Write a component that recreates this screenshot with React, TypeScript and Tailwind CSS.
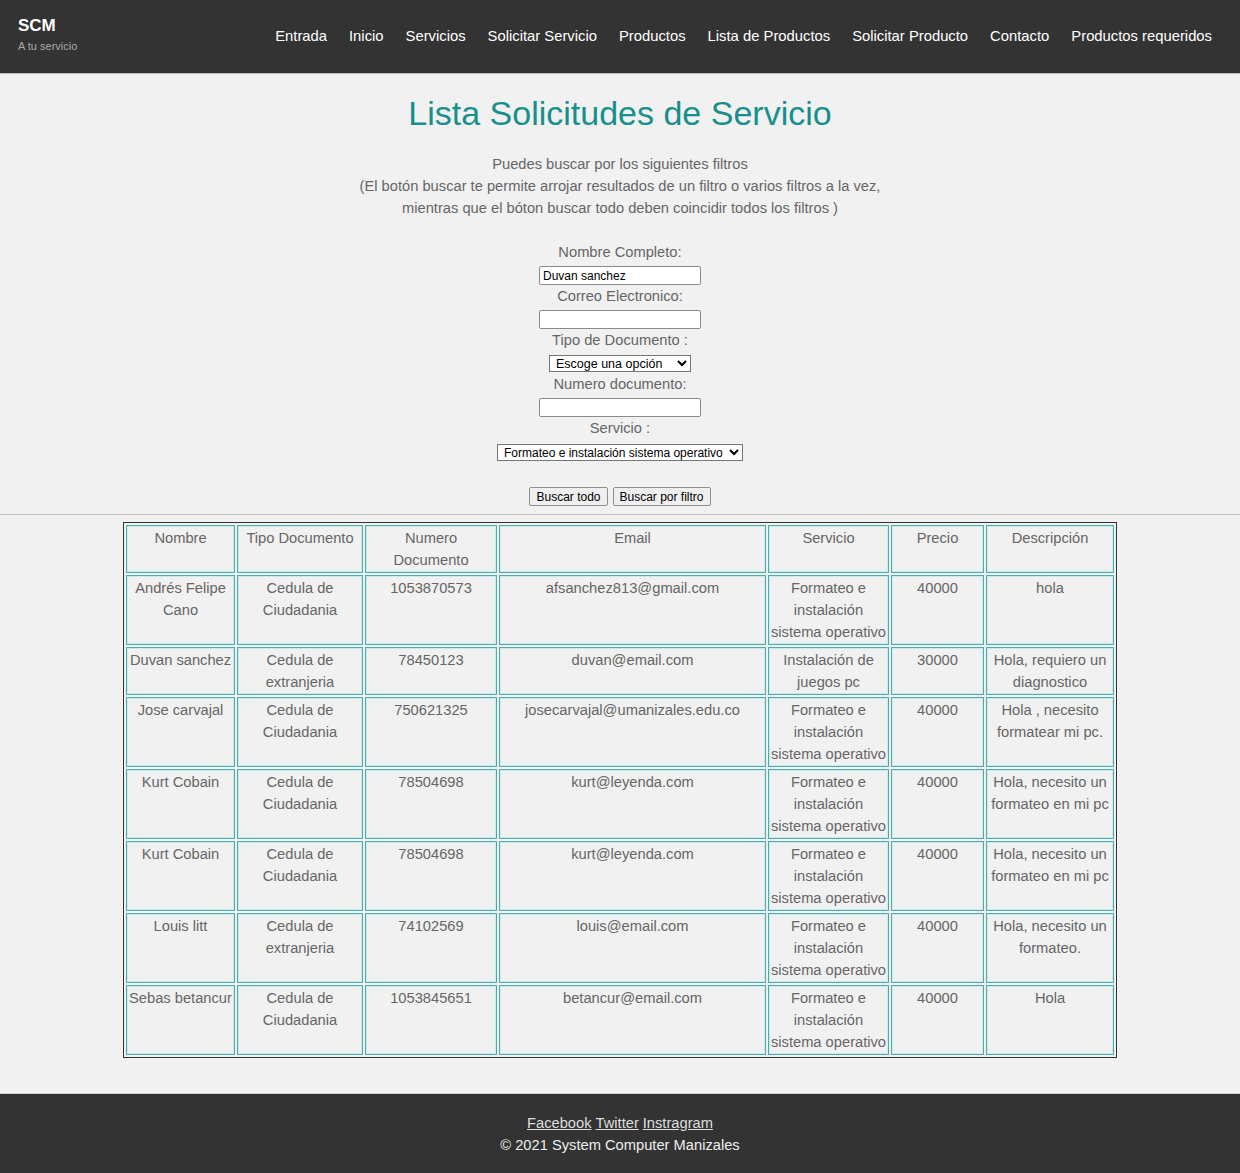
import React from "react";

const navLinks = [
  "Entrada",
  "Inicio",
  "Servicios",
  "Solicitar Servicio",
  "Productos",
  "Lista de Productos",
  "Solicitar Producto",
  "Contacto",
  "Productos requeridos",
];

const formateo = "Formateo e instalación sistema operativo";

const rows = [
  ["Andrés Felipe Cano", "Cedula de Ciudadania", "1053870573", "afsanchez813@gmail.com", formateo, "40000", "hola"],
  ["Duvan sanchez", "Cedula de extranjeria", "78450123", "duvan@email.com", "Instalación de juegos pc", "30000", "Hola, requiero un diagnostico"],
  ["Jose carvajal", "Cedula de Ciudadania", "750621325", "josecarvajal@umanizales.edu.co", formateo, "40000", "Hola , necesito formatear mi pc."],
  ["Kurt Cobain", "Cedula de Ciudadania", "78504698", "kurt@leyenda.com", formateo, "40000", "Hola, necesito un formateo en mi pc"],
  ["Kurt Cobain", "Cedula de Ciudadania", "78504698", "kurt@leyenda.com", formateo, "40000", "Hola, necesito un formateo en mi pc"],
  ["Louis litt", "Cedula de extranjeria", "74102569", "louis@email.com", formateo, "40000", "Hola, necesito un formateo."],
  ["Sebas betancur", "Cedula de Ciudadania", "1053845651", "betancur@email.com", formateo, "40000", "Hola"],
];

const headers = ["Nombre", "Tipo Documento", "Numero Documento", "Email", "Servicio", "Precio", "Descripción"];
const colWidths = [109, 126, 132, 267, 121, 93, 128];

const cell =
  "border border-[#54abab] shadow-[inset_0_0_0_1px_#c4eeee] px-[1px] py-[1px] align-top text-center font-normal leading-[22px] text-[#666]";

const Label = ({ children }: { children: React.ReactNode }) => (
  <div className="leading-[22px] text-[#666]">{children}</div>
);

const inputCls =
  "h-[19px] w-[162px] rounded-[2px] border border-[#8a8a8a] bg-white px-[3px] text-[12px] text-black outline-none";

const App = () => {
  return (
    <div className="flex min-h-[1173px] flex-col bg-[#f1f1f1] font-['Liberation_Sans',Arial,sans-serif] text-[14.7px]">
      <header className="flex h-[74px] items-center justify-between border-b border-[#bdbdbd] bg-[#333333] pl-[18px] pr-[28px]">
        <div className="-mt-[5px]">
          <div className="text-[17px] font-bold leading-[20px] text-white">SCM</div>
          <div className="mt-[3px] text-[11px] leading-[14px] text-[#a9a9a9]">A tu servicio</div>
        </div>
        <nav className="flex gap-[22px]">
          {navLinks.map((l) => (
            <a key={l} href="#" className="text-[14.8px] text-white">
              {l}
            </a>
          ))}
        </nav>
      </header>

      <main className="flex flex-1 flex-col items-center">
        <h1 className="mt-[19px] text-[34px] leading-[40px] text-[#17908c]">Lista Solicitudes de Servicio</h1>
        <p className="mt-[20px] text-center leading-[22px] text-[#666]">
          Puedes buscar por los siguientes filtros
          <br />
          (El botón buscar te permite arrojar resultados de un filtro o varios filtros a la vez,
          <br />
          mientras que el bóton buscar todo deben coincidir todos los filtros )
        </p>

        <form className="mt-[22px] flex flex-col items-center">
          <Label>Nombre Completo:</Label>
          <input className={`${inputCls} mt-[3px]`} defaultValue="Duvan sanchez" />
          <Label>Correo Electronico:</Label>
          <input className={`${inputCls} mt-[3px]`} />
          <Label>Tipo de Documento :</Label>
          <select className="mt-[4px] h-[17px] w-[142px] border border-[#767676] bg-white pl-[2px] text-[12.5px] leading-[15px] text-black">
            <option>Escoge una opción</option>
          </select>
          <div className="h-[1px]" />
          <Label>Numero documento:</Label>
          <input className={`${inputCls} mt-[3px]`} />
          <Label>Servicio :</Label>
          <select className="mt-[5px] h-[17px] w-[246px] border border-[#767676] bg-white pl-[2px] text-[12px] leading-[15px] text-black">
            <option>{formateo}</option>
          </select>
          <div className="mt-[26px] flex gap-[5px]">
            <button type="button" className="h-[19px] rounded-[2px] border border-[#8f8f8f] bg-[#efefef] px-[6px] text-[12px] leading-[16px] text-black">
              Buscar todo
            </button>
            <button type="button" className="h-[19px] rounded-[2px] border border-[#8f8f8f] bg-[#efefef] px-[6px] text-[12px] leading-[16px] text-black">
              Buscar por filtro
            </button>
          </div>
        </form>

        <hr className="mt-[8px] w-full border-t border-[#c4c4c4]" />

        <table className="mt-[7px] w-[991px] table-fixed border-separate border-spacing-[2px] border border-[#333]">
          <colgroup>
            {colWidths.map((w, i) => (
              <col key={i} style={{ width: w }} />
            ))}
          </colgroup>
          <thead>
            <tr>
              {headers.map((h) => (
                <th key={h} className={cell}>
                  {h}
                </th>
              ))}
            </tr>
          </thead>
          <tbody>
            {rows.map((r, i) => (
              <tr key={i}>
                {r.map((c, j) => (
                  <td key={j} className={cell}>
                    {c}
                  </td>
                ))}
              </tr>
            ))}
          </tbody>
        </table>
      </main>

      <footer className="mt-[35px] flex h-[80px] flex-col items-center justify-center border-t border-[#cfcfcf] bg-[#333333] text-[14.7px] leading-[22px]">
        <div className="flex gap-[4px] text-[#dedede]">
          <a href="#" className="underline">Facebook</a>
          <a href="#" className="underline">Twitter</a>
          <a href="#" className="underline">Instragram</a>
        </div>
        <div className="text-[#eeeeee]">© 2021 System Computer Manizales</div>
      </footer>
    </div>
  );
};

export default App;
